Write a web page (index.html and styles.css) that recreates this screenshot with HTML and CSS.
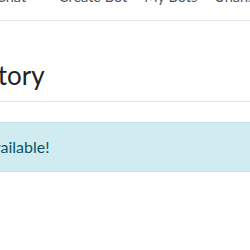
FILE: index.html
```html
<!DOCTYPE html>
<html>
<head>
<meta charset="utf-8">
<link rel="stylesheet" href="styles.css">
</head>
<body>
<div class="page">
  <nav class="navbar">
    <ul class="nav-links">
      <li class="nav-item">Chat <span class="caret"></span></li>
      <li class="nav-item">Create Bot</li>
      <li class="nav-item">My Bots</li>
      <li class="nav-item">Unanswered</li>
    </ul>
  </nav>
  <main class="container">
    <h1 class="title">Chat History</h1>
    <div class="alert">No chat history available!</div>
  </main>
</div>
</body>
</html>
```
FILE: styles.css
```css
html, body {
  margin: 0;
  padding: 0;
  overflow: hidden;
  background: #fff;
}
body {
  font-family: Lato, "Open Sans", sans-serif;
  color: #222;
}
.page {
  width: 700px;
  margin-left: -148px;
  margin-top: -12px;
}
.navbar {
  border-bottom: 1px solid #e7e7e7;
  height: 32px;
}
.nav-links {
  list-style: none;
  margin: 0;
  padding: 0 0 0 144px;
  display: flex;
  gap: 17px;
  font-size: 14.5px;
  line-height: 18px;
  color: #555;
}
.caret {
  display: inline-block;
  width: 0;
  height: 0;
  margin-left: 2px;
  margin-right: 2px;
  vertical-align: middle;
  border-top: 4px solid #777;
  border-left: 4px solid transparent;
  border-right: 4px solid transparent;
}
.title {
  font-size: 26px;
  font-weight: 400;
  margin: 0;
  padding: 39px 0 10px 48px;
  line-height: 1.2;
  border-bottom: 1px solid #e7e7e7;
}
.alert {
  margin-top: 20px;
  background: #d1ecf1;
  border: 1px solid #bee5eb;
  color: #0c5460;
  padding: 12px 20px;
  font-size: 16px;
  line-height: 24px;
}
```
